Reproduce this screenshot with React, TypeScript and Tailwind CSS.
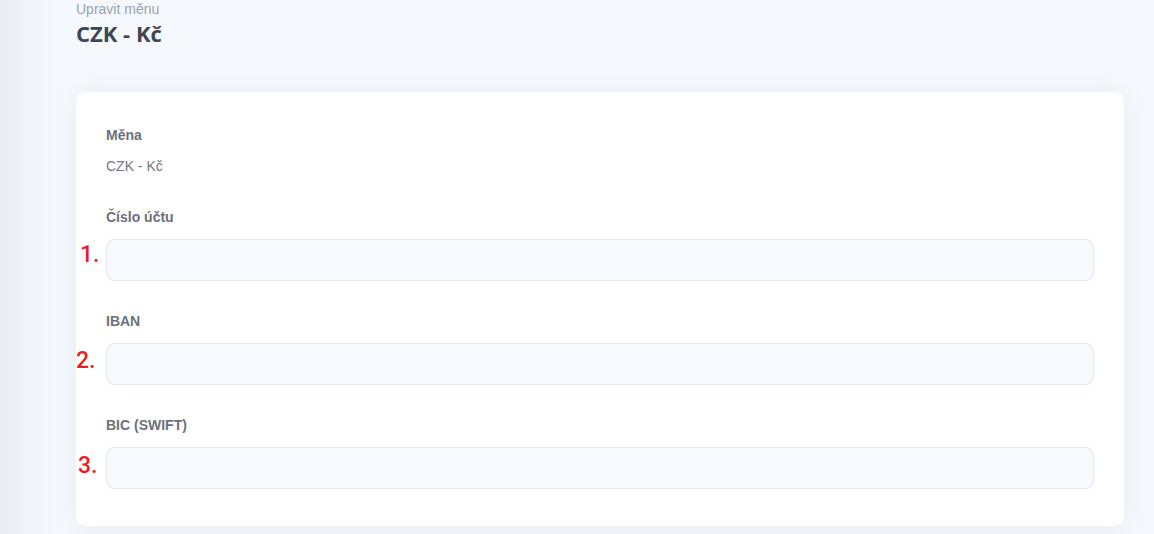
import React from 'react';

interface FieldProps {
  label: string;
  marker: string;
  markerClass: string;
  first?: boolean;
}

const Field: React.FC<FieldProps> = ({ label, marker, markerClass, first }) => {
  return (
    <div className={first ? 'mt-[31px]' : 'mt-[30px]'}>
      <label className="block text-[14px] leading-[20px] font-bold text-[#6b717b]">{label}</label>
      <div className="relative mt-[12px]">
        <span
          className={`absolute text-[23px] leading-none font-medium text-[#ec1c24] ${markerClass}`}
          style={{ fontFamily: 'Roboto, sans-serif' }}
        >
          {marker}
        </span>
        <input
          type="text"
          className="block w-full h-[42px] rounded-lg border border-[#e3e8ef] bg-[#f6f9fd] px-3 text-[14px] outline-none"
        />
      </div>
    </div>
  );
};

const App: React.FC = () => {
  return (
    <div
      className="min-h-[534px] h-[534px] overflow-hidden bg-[linear-gradient(to_right,#e8ecf2_0px,#f1f4f9_30px,#f5f8fc_62px)] pl-[76px] pr-[30px]"
      style={{ fontFamily: '"Liberation Sans", Arial, sans-serif' }}
    >
      <div className="-mt-[1px]">
        <p className="text-[14px] leading-[20px] text-[#9aa2ad]">Upravit měnu</p>
        <h1
          className="text-[22px] leading-[28px] font-bold text-[#3e4553]"
          style={{ fontFamily: '"Open Sans", sans-serif' }}
        >
          CZK - Kč
        </h1>
      </div>

      <div className="mt-[45px] rounded-[10px] bg-white px-[30px] pt-[33px] pb-[37px] shadow-[0_2px_22px_rgba(148,163,184,0.14)]">
        <div>
          <p className="text-[14px] leading-[20px] font-bold text-[#6b717b]">Měna</p>
          <p className="mt-[11px] text-[14px] leading-[20px] text-[#727a86]">CZK - Kč</p>
        </div>

        <Field first label="Číslo účtu" marker="1." markerClass="-left-[26px] top-[4px]" />
        <Field label="IBAN" marker="2." markerClass="-left-[30px] top-[6px]" />
        <Field label="BIC (SWIFT)" marker="3." markerClass="-left-[28px] top-[7px]" />
      </div>
    </div>
  );
};

export default App;
